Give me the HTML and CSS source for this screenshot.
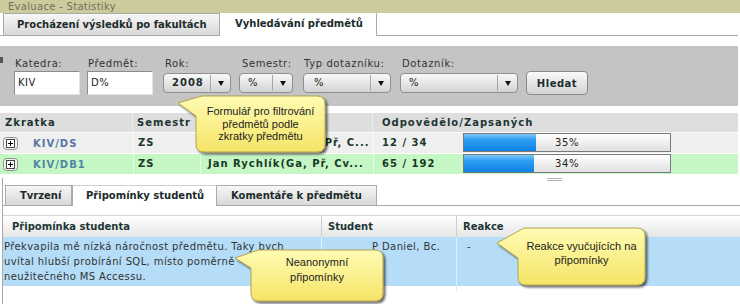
FILE: index.html
```html
<!DOCTYPE html>
<html lang="cs">
<head>
<meta charset="utf-8">
<title>Evaluace - Statistiky</title>
<link rel="stylesheet" href="styles.css">
</head>
<body>
<svg class="defs" width="0" height="0" aria-hidden="true">
  <defs>
    <linearGradient id="yel" x1="0" y1="0" x2="0" y2="1">
      <stop offset="0" stop-color="#fffcb4"/>
      <stop offset="1" stop-color="#f5e466"/>
    </linearGradient>
    <filter id="sh" x="-10%" y="-10%" width="130%" height="140%">
      <feDropShadow dx="2" dy="2" stdDeviation="1" flood-color="#000" flood-opacity=".6"/>
    </filter>
  </defs>
</svg>

<div class="titlebar">Evaluace - Statistiky</div>

<div class="tabs">
  <div class="tab tab-fak">Procházení výsledků po fakultách</div>
  <div class="tab active tab-pred">Vyhledávání předmětů</div>
</div>

<div class="filter">
  <div class="field f-katedra"><label>Katedra:</label><div class="input">KIV</div></div>
  <div class="field f-predmet"><label>Předmět:</label><div class="input">D%</div></div>
  <div class="field f-rok"><label>Rok:</label><div class="combo"><span class="val bold">2008</span><span class="arrow"><i></i></span></div></div>
  <div class="field f-sem"><label>Semestr:</label><div class="combo"><span class="val">%</span><span class="arrow"><i></i></span></div></div>
  <div class="field f-typ"><label>Typ dotazníku:</label><div class="combo"><span class="val val-typ">%</span><span class="arrow"><i></i></span></div></div>
  <div class="field f-dot"><label>Dotazník:</label><div class="combo"><span class="val">%</span><span class="arrow"><i></i></span></div></div>
  <button class="btn">Hledat</button>
</div>

<div class="results">
  <div class="thead">
    <div class="th c-zk">Zkratka</div>
    <div class="th c-sem">Semestr</div>
    <div class="th c-vyuc">Vyučující</div>
    <div class="th c-odp">Odpovědělo/Zapsaných</div>
  </div>
  <div class="trow r-grey">
    <div class="td c-zk"><svg class="exp" width="15" height="13" viewBox="0 0 15 13"><rect x="0.5" y="0.5" width="14" height="12" rx="3" fill="#f2f2f2" stroke="#8e8e8e"/><rect x="3.5" y="2.5" width="8" height="8" fill="#fff" stroke="#444"/><path d="M5 6.5h5M7.5 4v5" stroke="#000"/></svg><span class="code">KIV/DS</span></div>
    <div class="td c-sem">ZS</div>
    <div class="td c-vyuc">Pavel Herout(Ga, Př, C...</div>
    <div class="td c-odp">12 / 34</div>
    <div class="td c-bar"><div class="bar"><div class="fill" style="width:35%"></div><div class="pct">35%</div></div></div>
  </div>
  <div class="trow r-green">
    <div class="td c-zk"><svg class="exp" width="15" height="13" viewBox="0 0 15 13"><rect x="0.5" y="0.5" width="14" height="12" rx="3" fill="#f2f2f2" stroke="#8e8e8e"/><rect x="3.5" y="2.5" width="8" height="8" fill="#fff" stroke="#444"/><path d="M5 6.5h5M7.5 4v5" stroke="#000"/></svg><span class="code">KIV/DB1</span></div>
    <div class="td c-sem">ZS</div>
    <div class="td c-vyuc">Jan Rychlík(Ga, Př, Cv...</div>
    <div class="td c-odp">65 / 192</div>
    <div class="td c-bar"><div class="bar"><div class="fill" style="width:34%"></div><div class="pct">34%</div></div></div>
  </div>
</div>

<div class="lower">
  <div class="splitter"></div>
  <div class="tabs tabs2">
    <div class="tab tab-tvr">Tvrzení</div>
    <div class="tab active tab-prip">Připomínky studentů</div>
    <div class="tab tab-kom">Komentáře k předmětu</div>
  </div>
  <div class="grid">
    <div class="ghead">
      <div class="gh gh-1">Připomínka studenta</div>
      <div class="gh gh-2">Student</div>
      <div class="gh gh-3">Reakce</div>
    </div>
    <div class="grow">
      <div class="gc gc-1">Překvapila mě nízká náročnost předmětu. Taky bych<br>uvítal hlubší probírání SQL, místo poměrně<br>neužitečného MS Accessu.</div>
      <div class="gc gc-2">P Daniel, Bc.</div>
      <div class="gc gc-3">-</div>
    </div>
    <div class="gfill"><div class="gc"></div><div class="gc"></div><div class="gc"></div></div>
  </div>
</div>

<div class="callout c1">
  <svg width="156" height="64" viewBox="0 0 156 64"><path d="M20 22 L2 9 L26 2 H141 Q149 2 149 10 V50 Q149 58 141 58 H28 Q20 58 20 50 Z" fill="url(#yel)" stroke="#b3a54e" filter="url(#sh)"/></svg>
  <div class="txt">Formulář pro filtrování<br>předmětů podle<br>zkratky předmětu</div>
</div>
<div class="callout c2">
  <svg width="156" height="58" viewBox="0 0 156 58"><path d="M18 20 L2 10 L25 2 H142 Q150 2 150 10 V45 Q150 53 142 53 H26 Q18 53 18 45 Z" fill="url(#yel)" stroke="#b3a54e" filter="url(#sh)"/></svg>
  <div class="txt">Neanonymní<br>připomínky</div>
</div>
<div class="callout c3">
  <svg width="156" height="66" viewBox="0 0 156 66"><path d="M23 32 L2 17 L29 2 H142 Q150 2 150 10 V51 Q150 59 142 59 H31 Q23 59 23 51 Z" fill="url(#yel)" stroke="#b3a54e" filter="url(#sh)"/></svg>
  <div class="txt">Reakce vyučujících na<br>připomínky</div>
</div>
</body>
</html>
```

FILE: styles.css
```css
* { box-sizing: border-box; }

body {
  margin: 0;
  width: 740px;
  height: 304px;
  overflow: hidden;
  background: #fff;
  font-family: "DejaVu Sans", Verdana, sans-serif;
  font-size: 10px;
  color: #333;
  position: relative;
}

.defs { position: absolute; width: 0; height: 0; }

.titlebar {
  height: 13px;
  line-height: 13px;
  background: #cdcb9b;
  color: #6f6f62;
  padding-left: 8px;
  letter-spacing: 0.3px;
}

/* tabs */
.tabs {
  display: flex;
  height: 23px;
  margin-right: 2px;
  padding-left: 3px;
  border-bottom: 1px solid #a9a9a9;
}
.tab {
  height: 22px;
  line-height: 21px;
  font-weight: bold;
  color: #1c2b2b;
  background: linear-gradient(#f7f7f7, #d8d8d8);
  border: 1px solid #ababab;
  border-bottom: 0;
  padding-left: 13px;
  white-space: nowrap;
}
.tab.active {
  background: #fff;
  height: 23px;
  border-top: 0;
  border-left: 0;
}
.tab-fak { width: 217px; }
.tab-pred { width: 157px; padding-left: 15px; }

/* filter panel */
.filter {
  position: relative;
  display: flex;
  align-items: flex-start;
  margin-top: 10px;
  margin-right: 2px;
  height: 60px;
  background: #c4c4c4;
  padding: 12px 0 0 14px;
}
.filter::before {
  content: "";
  position: absolute;
  left: 0;
  top: 11px;
  width: 3px;
  height: 6px;
  background: #555;
}
.field { display: flex; flex-direction: column; }
.field label {
  height: 12px;
  line-height: 12px;
  padding-left: 1px;
  margin-bottom: 1px;
  letter-spacing: 0.6px;
  color: #333;
  white-space: nowrap;
}
.f-katedra { width: 66px; }
.f-predmet { width: 66px; margin-left: 7px; }
.f-rok { width: 68px; margin-left: 10px; }
.f-sem { width: 54px; margin-left: 8px; }
.f-typ { width: 88px; margin-left: 10px; }
.f-dot { width: 118px; margin-left: 9px; }
.f-rok label, .f-dot label { padding-left: 2px; }
.f-sem label { padding-left: 3px; }

.input {
  height: 24px;
  background: #fff;
  border: 1px solid #e4e4e4;
  border-top-color: #8c8c8c;
  border-left-color: #8c8c8c;
  line-height: 22px;
  padding-left: 3px;
  letter-spacing: 0.5px;
  color: #222;
}
.combo {
  display: flex;
  margin-top: 2px;
  height: 20px;
  border: 1px solid #8f8f8f;
  border-radius: 4px;
  background: linear-gradient(#f9f9f9, #d3d3d3);
}
.combo .val {
  flex: 1;
  padding-left: 8px;
  line-height: 18px;
  letter-spacing: 0.5px;
  color: #222;
}
.combo .val.bold { font-weight: bold; letter-spacing: 1px; color: #1d2d2d; }
.combo .val-typ { padding-left: 10px; }
.combo .arrow {
  width: 20px;
  margin: 1px 0;
  border-left: 1px solid #a6a6a6;
  display: flex;
  align-items: center;
  justify-content: center;
}
.combo .arrow i {
  width: 0;
  height: 0;
  border-left: 3.5px solid transparent;
  border-right: 3.5px solid transparent;
  border-top: 5px solid #111;
  margin-top: 1px;
}
.btn {
  margin-top: 13px;
  margin-left: 8px;
  width: 62px;
  height: 24px;
  border: 1px solid #8a8a8a;
  border-radius: 4px;
  background: linear-gradient(#fafafa, #d2d2d2);
  font-family: inherit;
  font-size: 10px;
  font-weight: bold;
  letter-spacing: 0.5px;
  color: #1d2f2f;
  padding: 0;
}

/* results table */
.results { margin-top: 7px; width: 738px; }
.thead {
  display: grid;
  grid-template-columns: 133px 67px 173px 365px;
  height: 19px;
  background: #dedede;
}
.th {
  line-height: 19px;
  font-weight: bold;
  letter-spacing: 1px;
  color: #1d3535;
  padding-left: 4px;
  border-right: 1px solid #ececec;
  white-space: nowrap;
  overflow: hidden;
}
.th.c-zk { padding-left: 5px; }
.th.c-vyuc { padding-left: 7px; }
.th.c-odp { padding-left: 9px; border-right: 0; }

.trow {
  display: grid;
  grid-template-columns: 133px 67px 173px 87px 278px;
  height: 20px;
  margin-top: 1px;
}
.r-grey { background: #efefef; }
.r-green { background: #c5f7c5; }
.td {
  line-height: 19px;
  font-weight: bold;
  letter-spacing: 1px;
  color: #183828;
  padding-left: 4px;
  white-space: nowrap;
  overflow: hidden;
  border-left: 1px solid rgba(255, 255, 255, 0.6);
}
.td.c-zk { display: flex; align-items: center; padding-left: 3px; border-left: 0; }
.td.c-vyuc { padding-left: 7px; }
.td.c-odp { padding-left: 8px; }
.exp { flex: none; margin-top: 1px; }
.code { margin-left: 15px; color: #5677a6; }
.r-green .code { color: #4f86a2; }

.td.c-bar { padding-left: 3px; border-left: 0; }
.bar {
  display: grid;
  width: 208px;
  height: 19px;
  border: 1px solid #7a7a7a;
  background: linear-gradient(#ffffff, #e0e0e0);
}
.bar > * { grid-area: 1 / 1; }
.fill {
  height: 100%;
  background: linear-gradient(#7fcaf9, #2c9bf0 35%, #0f82e2);
}
.pct {
  text-align: center;
  line-height: 17px;
  font-weight: normal;
  letter-spacing: 0.6px;
  color: #222;
}

/* lower panel */
.lower {
  margin-left: 2px;
  height: 130px;
  border-left: 1px solid #a8a8a8;
}
.splitter {
  width: 15px;
  height: 3px;
  margin: 4px 0 4px 544px;
  border-top: 1px solid #b5b5b5;
  border-bottom: 1px solid #b5b5b5;
}
.tabs2 {
  height: 21px;
  padding-left: 2px;
  margin-right: 0;
}
.tabs2 .tab {
  height: 20px;
  line-height: 19px;
  padding-left: 14px;
}
.tabs2 .tab.active {
  height: 21px;
  border-left: 1px solid #ababab;
  border-right: 1px solid #ababab;
  border-top: 1px solid #d0d0d0;
  padding-left: 13px;
}
.tab-tvr { width: 67px; }
.tab-prip { width: 145px; }
.tab-kom { width: 160px; border-left: 0 !important; }

.grid { margin-top: 9px; }
.ghead, .grow, .gfill {
  display: grid;
  grid-template-columns: 319px 135px 281px;
}
.ghead {
  height: 22px;
  border-top: 1px solid #d6d6d6;
  background: linear-gradient(#ffffff, #e6e6e6);
}
.gh {
  line-height: 21px;
  font-weight: bold;
  color: #1d3535;
  padding-left: 6px;
  border-right: 1px solid #cdcdcd;
}
.gh-1 { padding-left: 9px; }
.gh-3 { border-right: 0; }
.grow {
  height: 49px;
  background: #b5ddf8;
}
.gc {
  padding: 2px 0 0 1px;
  line-height: 15px;
  letter-spacing: 0.4px;
  color: #333;
  white-space: nowrap;
  overflow: hidden;
  border-right: 1px solid rgba(255, 255, 255, 0.55);
}
.gc-2 { padding-left: 50px; }
.gc-3 { padding-left: 10px; border-right: 0; }
.gfill { height: 5px; }
.gfill .gc { border-right: 1px solid #e6e6e6; }
.gfill .gc:last-child { border-right: 0; }

/* callouts */
.callout {
  position: absolute;
  font-family: "Liberation Sans", Arial, sans-serif;
  font-size: 11px;
  color: #222;
  text-align: center;
}
.callout svg { position: absolute; left: 0; top: 0; overflow: visible; }
.callout .txt { position: relative; }
.c1 { left: 176px; top: 94px; width: 156px; height: 64px; }
.c1 .txt { margin-left: 20px; width: 129px; padding-top: 11px; line-height: 12.5px; }
.c2 { left: 233px; top: 248px; width: 156px; height: 58px; }
.c2 .txt { margin-left: 18px; width: 132px; padding-top: 7px; line-height: 15px; }
.c3 { left: 495px; top: 226px; width: 156px; height: 66px; }
.c3 .txt { margin-left: 23px; width: 127px; padding-top: 13px; line-height: 14px; }
```
